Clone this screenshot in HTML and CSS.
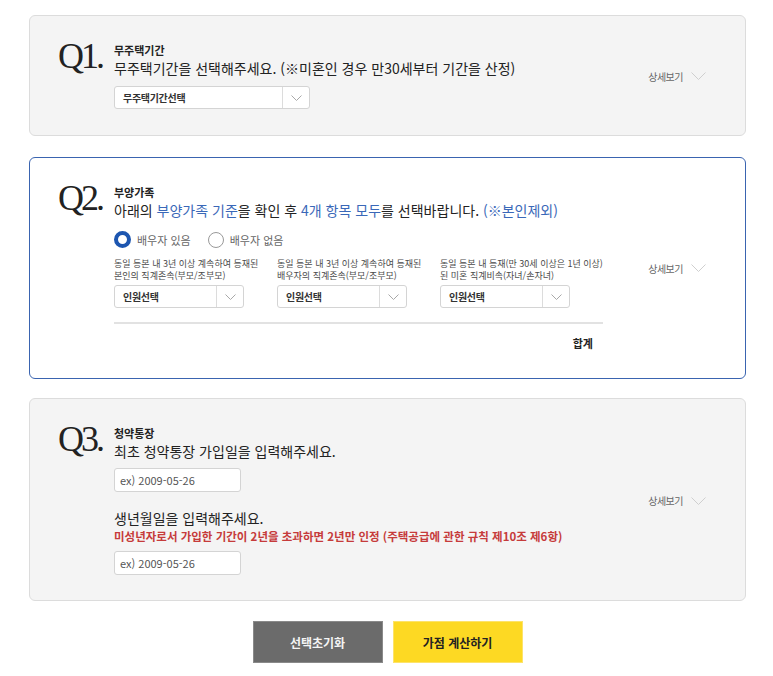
FILE: index.html
```html
<!DOCTYPE html>
<html lang="ko">
<head>
<meta charset="utf-8">
<title>청약 가점 계산기</title>
<link rel="stylesheet" href="styles.css">
</head>
<body>
<div class="page">
  <section class="card card-first">
    <div class="qnum">Q1.</div>
    <div class="qbody">
      <div class="qtitle">무주택기간</div>
      <div class="qtext">무주택기간을 선택해주세요. (※미혼인 경우 만30세부터 기간을 산정)</div>
      <div class="select select-wide">
        <span class="select-label">무주택기간선택</span>
        <span class="select-arrow"><svg width="11" height="6" viewBox="0 0 11 6"><path d="M0.5 0.5 L5.5 5.5 L10.5 0.5" fill="none" stroke="#a8a8a8" stroke-width="1"/></svg></span>
      </div>
    </div>
    <div class="more">상세보기 <svg width="15" height="8" viewBox="0 0 15 8"><path d="M0.5 0.5 L7.5 7.5 L14.5 0.5" fill="none" stroke="#cfcfcf" stroke-width="1"/></svg></div>
  </section>

  <section class="card card-active">
    <div class="qnum">Q2.</div>
    <div class="qbody">
      <div class="qtitle">부양가족</div>
      <div class="qtext">아래의 <span class="hl">부양가족 기준</span>을 확인 후 <span class="hl">4개 항목 모두</span>를 선택바랍니다. <span class="hl">(※본인제외)</span></div>
      <div class="radios">
        <label class="radio"><span class="radio-dot radio-on"></span>배우자 있음</label>
        <label class="radio"><span class="radio-dot"></span>배우자 없음</label>
      </div>
      <div class="family-grid">
        <div class="family-item">
          <div class="family-label">동일 등본 내 3년 이상 계속하여 등재된<br>본인의 직계존속(부모/조부모)</div>
          <div class="select select-small">
            <span class="select-label">인원선택</span>
            <span class="select-arrow"><svg width="11" height="6" viewBox="0 0 11 6"><path d="M0.5 0.5 L5.5 5.5 L10.5 0.5" fill="none" stroke="#a8a8a8" stroke-width="1"/></svg></span>
          </div>
        </div>
        <div class="family-item">
          <div class="family-label">동일 등본 내 3년 이상 계속하여 등재된<br>배우자의 직계존속(부모/조부모)</div>
          <div class="select select-small">
            <span class="select-label">인원선택</span>
            <span class="select-arrow"><svg width="11" height="6" viewBox="0 0 11 6"><path d="M0.5 0.5 L5.5 5.5 L10.5 0.5" fill="none" stroke="#a8a8a8" stroke-width="1"/></svg></span>
          </div>
        </div>
        <div class="family-item">
          <div class="family-label">동일 등본 내 등재(만 30세 이상은 1년 이상)<br>된 미혼 직계비속(자녀/손자녀)</div>
          <div class="select select-small">
            <span class="select-label">인원선택</span>
            <span class="select-arrow"><svg width="11" height="6" viewBox="0 0 11 6"><path d="M0.5 0.5 L5.5 5.5 L10.5 0.5" fill="none" stroke="#a8a8a8" stroke-width="1"/></svg></span>
          </div>
        </div>
      </div>
      <div class="total">합계</div>
    </div>
    <div class="more">상세보기 <svg width="15" height="8" viewBox="0 0 15 8"><path d="M0.5 0.5 L7.5 7.5 L14.5 0.5" fill="none" stroke="#cfcfcf" stroke-width="1"/></svg></div>
  </section>

  <section class="card">
    <div class="qnum">Q3.</div>
    <div class="qbody">
      <div class="qtitle">청약통장</div>
      <div class="qtext">최초 청약통장 가입일을 입력해주세요.</div>
      <div class="date-input">ex) 2009-05-26</div>
      <div class="qtext qtext-second">생년월일을 입력해주세요.</div>
      <div class="warn">미성년자로서 가입한 기간이 2년을 초과하면 2년만 인정 (주택공급에 관한 규칙 제10조 제6항)</div>
      <div class="date-input">ex) 2009-05-26</div>
    </div>
    <div class="more">상세보기 <svg width="15" height="8" viewBox="0 0 15 8"><path d="M0.5 0.5 L7.5 7.5 L14.5 0.5" fill="none" stroke="#cfcfcf" stroke-width="1"/></svg></div>
  </section>

  <div class="actions">
    <button class="btn btn-reset" type="button">선택초기화</button>
    <button class="btn btn-calc" type="button">가점 계산하기</button>
  </div>
</div>
</body>
</html>
```

FILE: styles.css
```css
* { box-sizing: border-box; }

body {
  margin: 0;
  background: #ffffff;
  font-family: "Noto Sans CJK KR", "Noto Sans", sans-serif;
  color: #222;
}

.page {
  width: 773px;
  padding: 15px 0 0 29px;
}

.card {
  width: 717px;
  display: flex;
  align-items: flex-start;
  background: #f4f4f4;
  border: 1px solid #dcdcdc;
  border-radius: 6px;
  padding: 27px 0 25px 28px;
  margin-bottom: 20px;
}

.card-first {
  padding-bottom: 26px;
  margin-bottom: 21px;
}

.card-active {
  background: #ffffff;
  border-color: #3a64b0;
  padding-bottom: 27px;
  margin-bottom: 19px;
}

.qnum {
  width: 56px;
  flex-shrink: 0;
  font-family: "Liberation Serif", "DejaVu Serif", serif;
  font-size: 36px;
  line-height: 35px;
  letter-spacing: -3px;
  color: #222;
  margin-top: -4px;
}

.qbody {
  flex: 1;
  display: flex;
  flex-direction: column;
  align-items: flex-start;
}

.qtitle {
  font-size: 11px;
  line-height: 14px;
  font-weight: 700;
  color: #222;
  margin-bottom: 2px;
}

.qtext {
  font-size: 14px;
  line-height: 18px;
  color: #222;
}

.hl { color: #3a68b8; }

.select {
  display: flex;
  align-items: stretch;
  height: 23px;
  background: #fff;
  border: 1px solid #d4d4d4;
  border-radius: 3px;
  margin-top: 9px;
}

.select-wide { width: 196px; }
.select-small { width: 130px; margin-top: 3px; }

.select-label {
  flex: 1;
  display: flex;
  align-items: center;
  padding-left: 8px;
  font-size: 10px;
  font-weight: 700;
  letter-spacing: -0.3px;
  color: #333;
}

.select-arrow {
  width: 27px;
  border-left: 1px solid #dcdcdc;
  display: flex;
  align-items: center;
  justify-content: center;
}

.more {
  align-self: center;
  margin-left: auto;
  margin-right: 39px;
  display: flex;
  align-items: center;
  gap: 8px;
  font-size: 10px;
  letter-spacing: -0.5px;
  color: #666;
  white-space: nowrap;
}

.radios {
  display: flex;
  align-items: center;
  gap: 17px;
  margin-top: 12px;
  height: 17px;
}

.radio {
  display: flex;
  align-items: center;
  gap: 6px;
  font-size: 11px;
  color: #666;
}

.radio-dot {
  width: 16px;
  height: 16px;
  border-radius: 50%;
  border: 1px solid #999;
  background: #fff;
}

.radio-on {
  width: 17px;
  height: 17px;
  border: 4px solid #1d56b0;
}

.family-grid {
  display: grid;
  grid-template-columns: 163px 163px 163px;
  margin-top: 10px;
  width: 489px;
}

.family-label {
  font-size: 9px;
  line-height: 12px;
  color: #4a4a4a;
  white-space: nowrap;
}

.total {
  width: 489px;
  margin-top: 14px;
  border-top: 2px solid #e2e2e2;
  padding: 12px 10px 0 0;
  text-align: right;
  font-size: 11px;
  line-height: 15px;
  font-weight: 700;
  color: #222;
}

.date-input {
  width: 127px;
  height: 24px;
  margin-top: 8px;
  background: #fff;
  border: 1px solid #d4d4d4;
  border-radius: 3px;
  padding-left: 5px;
  display: flex;
  align-items: center;
  font-size: 11px;
  color: #555;
}

.qtext-second { margin-top: 17px; }

.warn {
  margin-top: 2px;
  font-size: 11.5px;
  line-height: 14px;
  font-weight: 700;
  color: #c63b3b;
}

.actions {
  width: 717px;
  display: flex;
  justify-content: center;
  gap: 10px;
  margin-top: 1px;
}

.btn {
  width: 130px;
  height: 42px;
  border: 1px solid transparent;
  font-family: "Noto Sans CJK KR", "Noto Sans", sans-serif;
  font-size: 12px;
  font-weight: 700;
  cursor: pointer;
  padding: 0;
}

.btn-reset {
  background: #6b6b6b;
  border-color: #8a8a8a;
  color: #f4f4f4;
}

.btn-calc {
  background: #fdd923;
  border-color: #fde36a;
  color: #222;
}
```
